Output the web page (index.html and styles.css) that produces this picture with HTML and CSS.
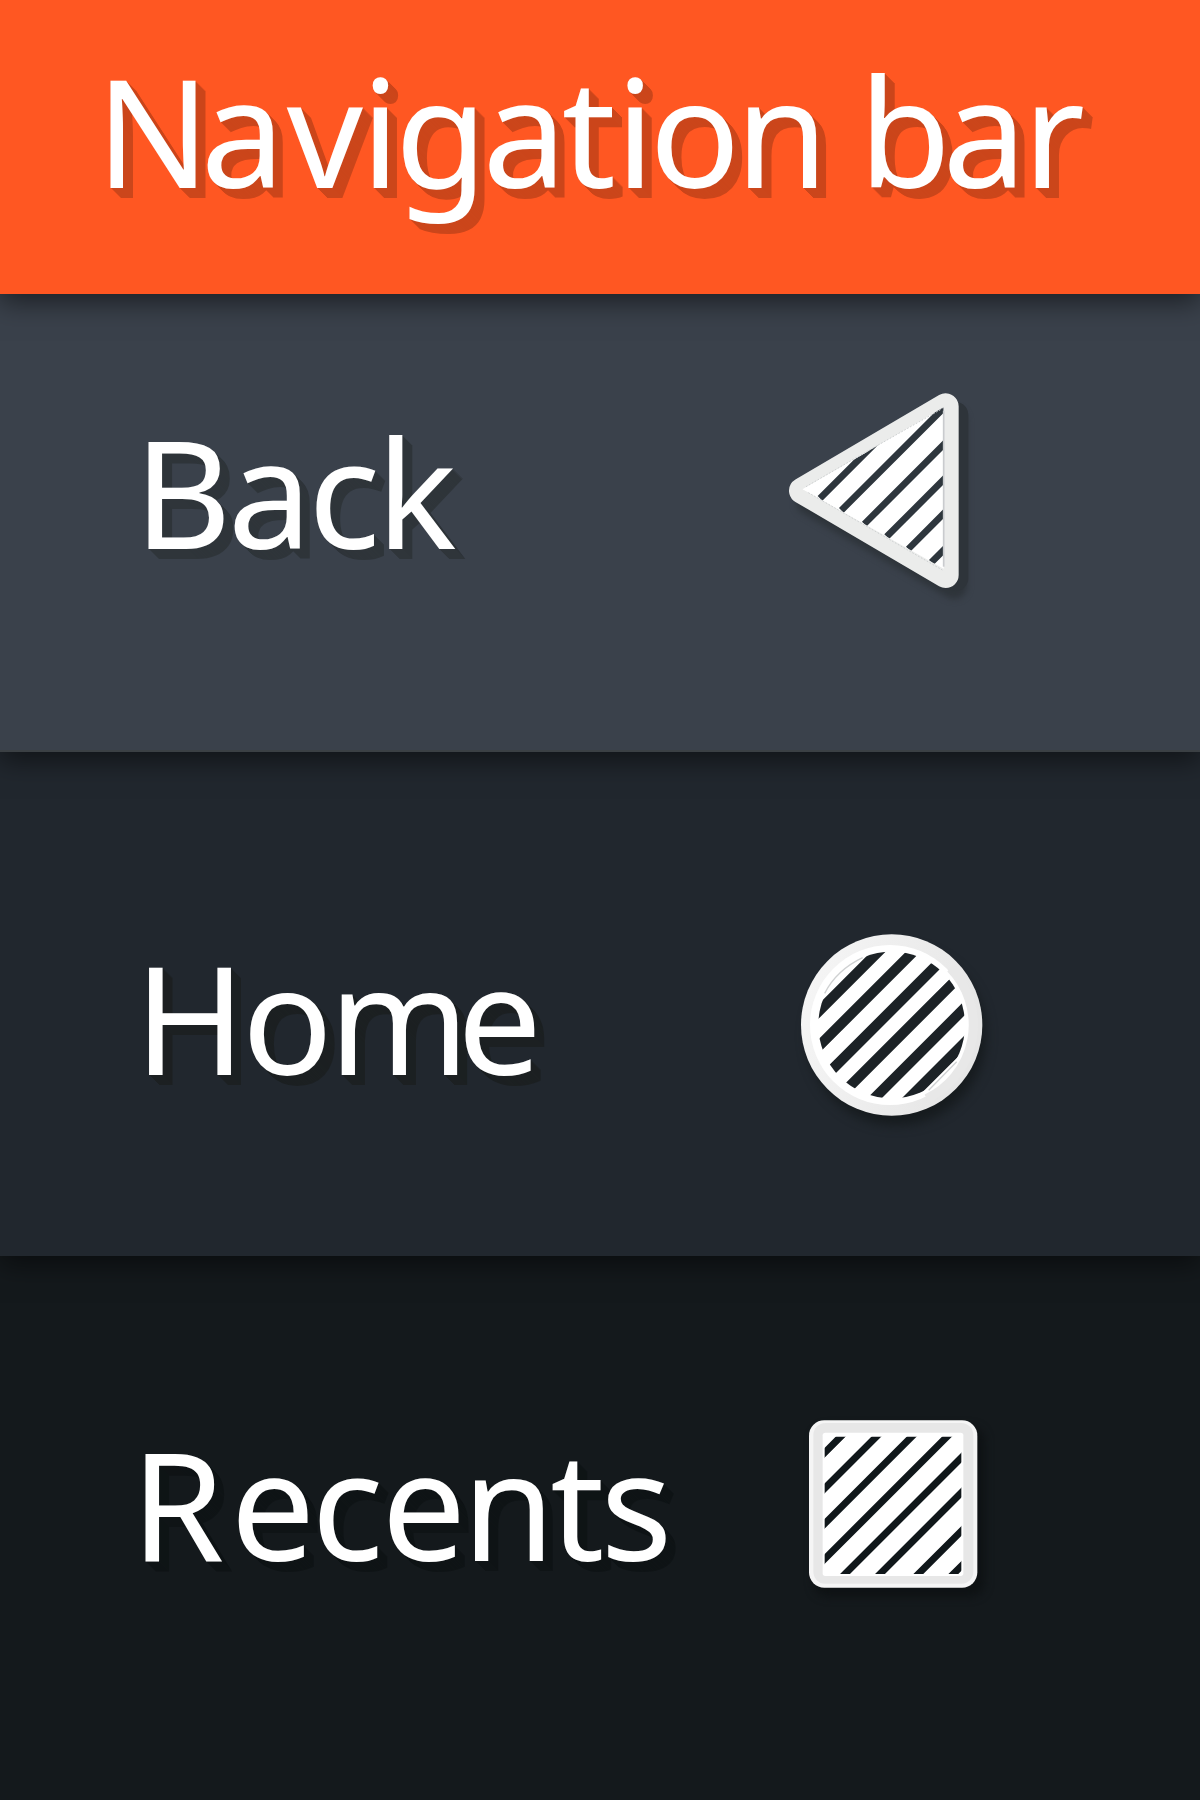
FILE: index.html
```html
<!DOCTYPE html>
<html lang="en">
<head>
<meta charset="utf-8">
<title>Navigation bar</title>
<link rel="stylesheet" href="styles.css">
</head>
<body>
<main class="page">
  <header class="band header"><h1 class="label"><span class="k-n">N</span><span class="k-a">a</span><span class="k-v">v</span><span class="k-tight">iga</span><span class="k-t">t</span><span class="k-tight">ion</span> <span class="k-b">b</span>ar</h1></header>
  <section class="band back">
    <h2 class="label">Back</h2>
    <svg class="icon" width="220" height="230" viewBox="0 0 660 690">
      <defs>
        <clipPath id="tri"><path d="M98 328 521 82V566Z"/></clipPath>
        <filter id="blurBack" color-interpolation-filters="sRGB" x="-20%" y="-20%" width="140%" height="140%"><feGaussianBlur stdDeviation="10"/></filter>
      </defs>
      <g class="shade-back" stroke-linejoin="round" stroke-width="78">
        <path filter="url(#blurBack)" d="M118 366 552 124V618Z"/>
        <path d="M120 352 556 104V594Z"/>
      </g>
      <path class="rim" stroke-linejoin="round" stroke-width="78" d="M96 332 527 79V585Z"/>
      <path fill="#fff" d="M98 328 521 82V566Z"/>
      <g class="stripes-back" clip-path="url(#tri)" stroke-width="20">
        <path d="M150 355 330 175M214 391 530 75M283 432 530 185M350 470 530 290M415 507 530 392M484 547 530 501"/>
      </g>
      <path d="M98 328 300 211Q258 227 218 268L150 318 118 337Z" fill="#fff"/>
      <path d="M108 320 300 209 517 86M115 338 517 570" fill="none" stroke="#ced1d2" stroke-width="3" stroke-dasharray="5 5"/>
      <path d="M521 92V560" stroke="#c9cbce" stroke-width="5"/>
    </svg>
  </section>
  <section class="band home">
    <h2 class="label">Ho<span class="k-m">m</span>e</h2>
    <svg class="icon" width="230" height="240" viewBox="0 0 690 720">
      <defs>
        <clipPath id="disc"><circle cx="335" cy="345" r="220"/></clipPath>
        <filter id="blurHome" color-interpolation-filters="sRGB" x="-20%" y="-20%" width="140%" height="140%"><feGaussianBlur stdDeviation="16"/></filter>
        <linearGradient id="ring" x1="0" y1="0" x2="1" y2="0.3"><stop offset=".1" stop-color="#f5f5f5"/><stop offset="1" stop-color="#e6e6e6"/></linearGradient>
      </defs>
      <circle class="shade-home" filter="url(#blurHome)" cx="350" cy="378" r="268"/>
      <circle cx="335" cy="345" r="272" fill="url(#ring)"/>
      <circle cx="330" cy="345" r="240" fill="#fff"/>
      <path d="M512 175A245 245 0 0 1 440 566" fill="none" stroke="#e8e8e8" stroke-width="28"/>
      <circle cx="335" cy="345" r="220" fill="#fff"/>
      <g class="stripes-home" clip-path="url(#disc)" stroke-width="31">
        <path d="M60 360 360 60M60 465 465 60M60 575 575 60M60 678 638 100M180 668 648 200M290 662 652 300"/>
      </g>
      <path d="M134 250Q170 180 248 143M446 541 530 455" fill="none" stroke="#cfd1d2" stroke-width="4"/>
    </svg>
  </section>
  <section class="band recents">
    <h2 class="label"><span class="k-r">R</span>e<span class="k-c">c</span>e<span class="k-tight">n</span>ts</h2>
    <svg class="icon" width="210" height="210" viewBox="0 0 630 630">
      <defs>
        <clipPath id="square"><path d="M104 110H514V522H104Z"/></clipPath>
        <filter id="blurRecents" color-interpolation-filters="sRGB" x="-20%" y="-20%" width="140%" height="140%"><feGaussianBlur stdDeviation="13"/></filter>
      </defs>
      <rect class="shade-recents" filter="url(#blurRecents)" x="70" y="80" width="515" height="510" rx="45"/>
      <rect x="57" y="61" width="505" height="502" rx="46" fill="#f5f5f5"/>
      <rect x="70" y="69" width="480" height="482" rx="36" fill="#e7e7e7"/>
      <rect x="98" y="98" width="422" height="430" rx="8" fill="#fff"/>
      <g class="stripes-recents" clip-path="url(#square)" stroke-width="21">
        <path d="M84 178 174 88M84 285 281 88M84 391 387 88M84 497 493 88M150 537 534 153M255 537 534 258M370 537 534 373M475 537 534 478"/>
      </g>
    </svg>
  </section>
</main>
</body>
</html>
```
FILE: styles.css
```css
* { box-sizing: border-box; }
body { margin: 0; }
.page {
  display: grid;
  grid-template-rows: 294px 458px 504px 544px;
  width: 1200px;
  height: 1800px;
  overflow: hidden;
}
.band {
  position: relative;
  display: flex;
  align-items: flex-start;
  justify-content: space-between;
  box-shadow: 0 8px 26px rgba(0, 0, 0, .52);
}
.label {
  margin: 0;
  font: 400 150px/204px "Noto Sans", sans-serif;
  letter-spacing: -3.75px;
  white-space: nowrap;
  color: #fff;
  text-shadow:
    1px 1px var(--fold), 2px 2px var(--fold), 3px 3px var(--fold), 4px 4px var(--fold), 5px 5px var(--fold),
    6px 6px var(--fold), 7px 7px var(--fold), 8px 8px var(--fold), 9px 9px var(--fold), 10px 10px var(--fold);
}
/* Optical kerning of individual letters */
.k-n { letter-spacing: -9.3px; }
.k-a { letter-spacing: 1.8px; }
.k-v { letter-spacing: -1.75px; }
.k-t { letter-spacing: -.35px; }
.k-b { letter-spacing: -8.3px; }
.k-m { letter-spacing: -12px; }
.k-r { letter-spacing: 6.25px; }
.k-c { letter-spacing: -2px; }
.k-tight { letter-spacing: -4.8px; }
.icon { flex: none; display: block; }
.header { --fold: #cb461b; z-index: 4; padding: 28px 0 0 96px; background: #ff5722; }
.back { --fold: #2f353a; z-index: 3; padding: 86px 210px 0 134px; background: #3a414b; border-bottom: 2px solid #3b4044; }
.home { --fold: #1c2022; z-index: 2; padding: 158px 190px 0 134.6px; background: #21272e; }
.recents { --fold: #0f1416; z-index: 1; padding: 144px 200px 0 131px; background: #14191c; }
.back .label { margin-top: 9px; }
.home .label { margin-top: 5px; }
.recents .label { margin-top: 1px; }
.rim { fill: #ebeceb; stroke: #ebeceb; }
.shade-back { fill: #2e343a; stroke: #2e343a; }
.shade-home { fill: #161b1e; }
.shade-recents { fill: #0e1214; }
.stripes-back { stroke: #2e363d; }
.stripes-home { stroke: #1c2226; }
.stripes-recents { stroke: #10171a; }
```
